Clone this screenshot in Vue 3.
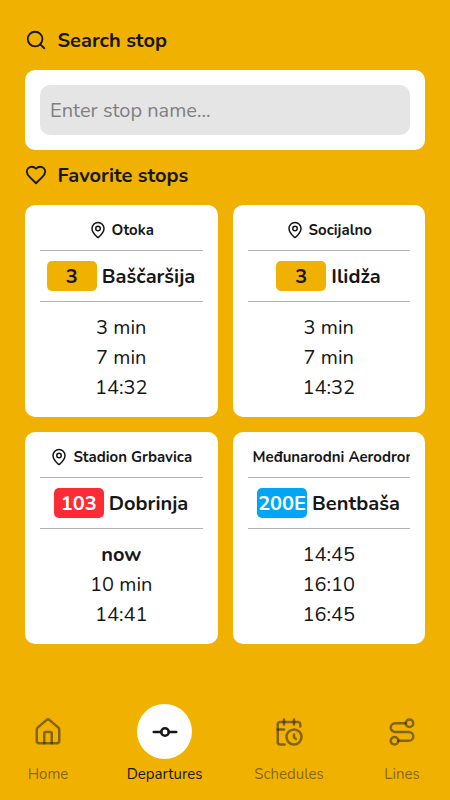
<script setup>
const stops = [
  { id: 'otoka', name: 'Otoka', line: '3', tone: 'yellow', to: 'Baščaršija', times: ['3 min', '7 min', '14:32'] },
  { id: 'socijalno', name: 'Socijalno', line: '3', tone: 'yellow', to: 'Ilidža', times: ['3 min', '7 min', '14:32'] },
  { id: 'stadion', name: 'Stadion Grbavica', line: '103', tone: 'red', to: 'Dobrinja', times: ['now', '10 min', '14:41'] },
  { id: 'aerodrom', name: 'Međunarodni Aerodrom', line: '200E', tone: 'blue', to: 'Bentbaša', times: ['14:45', '16:10', '16:45'] },
]

const tabs = [
  {
    id: 'home', label: 'Home',
    paths: [
      'M15 21v-8a1 1 0 0 0-1-1h-4a1 1 0 0 0-1 1v8',
      'M3 10a2 2 0 0 1 .709-1.528l7-5.999a2 2 0 0 1 2.582 0l7 5.999A2 2 0 0 1 21 10v9a2 2 0 0 1-2 2H5a2 2 0 0 1-2-2z',
    ],
    circles: [],
  },
  { id: 'departures', label: 'Departures', active: true, paths: ['M3 12h6', 'M15 12h6'], circles: [[12, 12, 3]] },
  {
    id: 'schedules', label: 'Schedules',
    paths: [
      'M21 7.5V6a2 2 0 0 0-2-2H5a2 2 0 0 0-2 2v14a2 2 0 0 0 2 2h3.5',
      'M16 2v4', 'M8 2v4', 'M3 10h5', 'M17.5 17.5 16 16.3V14',
    ],
    circles: [[16, 16, 6]],
  },
  {
    id: 'lines', label: 'Lines',
    paths: ['M9 19h8.5a3.5 3.5 0 0 0 0-7h-11a3.5 3.5 0 0 1 0-7H15'],
    circles: [[6, 19, 3], [18, 5, 3]],
  },
]
</script>

<template>
  <div class="screen">
    <main class="content">
      <h2 class="heading">
        <svg class="icon heading-icon" viewBox="0 0 24 24"><circle cx="11" cy="11" r="8" /><path d="m21 21-4.3-4.3" /></svg>
        <span class="title">Search stop</span>
      </h2>
      <div class="search-card">
        <input class="search-input" type="text" placeholder="Enter stop name...">
      </div>
      <h2 class="heading">
        <svg class="icon heading-icon" viewBox="0 0 24 24"><path d="M19 14c1.49-1.46 3-3.21 3-5.5A5.5 5.5 0 0 0 16.5 3c-1.76 0-3 .5-4.5 2-1.5-1.5-2.74-2-4.5-2A5.5 5.5 0 0 0 2 8.5c0 2.3 1.5 4.05 3 5.5l7 7Z" /></svg>
        <span class="title">Favorite stops</span>
      </h2>
      <div class="grid">
        <article v-for="stop in stops" :key="stop.id" class="card">
          <div class="stop">
            <svg class="icon pin" viewBox="0 0 24 24"><path d="M20 10c0 4.993-5.539 10.193-7.399 11.799a1 1 0 0 1-1.202 0C9.539 20.193 4 14.993 4 10a8 8 0 0 1 16 0" /><circle cx="12" cy="10" r="3" /></svg>
            <span class="stop-name">{{ stop.name }}</span>
          </div>
          <div class="route">
            <span class="badge" :class="stop.tone">{{ stop.line }}</span>
            <span class="destination">{{ stop.to }}</span>
          </div>
          <div class="times">
            <span v-for="time in stop.times" :key="time" class="time" :class="{ now: time === 'now' }">{{ time }}</span>
          </div>
        </article>
      </div>
    </main>
    <nav class="tabs">
      <a v-for="tab in tabs" :key="tab.id" class="tab" :class="[tab.id, { active: tab.active }]">
        <span class="bubble">
          <svg class="icon tab-icon" viewBox="0 0 24 24">
            <path v-for="d in tab.paths" :key="d" :d="d" />
            <circle v-for="c in tab.circles" :key="c.join()" :cx="c[0]" :cy="c[1]" :r="c[2]" />
          </svg>
        </span>
        <span class="tab-label">{{ tab.label }}</span>
      </a>
    </nav>
  </div>
</template>

<style>
body { margin: 0; background: #f0b100; }
</style>

<style scoped>
.screen {
  box-sizing: border-box;
  height: 800px;
  display: flex;
  flex-direction: column;
  justify-content: space-between;
  overflow: hidden;
  background: #f0b100;
  color: #171717;
  font-family: Nunito, Lato, "Noto Sans", sans-serif;
  font-size: 20px;
  line-height: 30px;
}
.content { padding: 25px 25px 0; }
.icon {
  fill: none;
  stroke: currentColor;
  stroke-width: 2;
  stroke-linecap: round;
  stroke-linejoin: round;
}
.heading {
  display: flex;
  align-items: center;
  gap: 10.5px;
  height: 30px;
  margin: 0;
  font-size: 20px;
  font-weight: 700;
}
.heading-icon { width: 22px; height: 22px; }
.title, .destination { padding-top: 2px; }
.search-card {
  margin: 15px 0 10px;
  padding: 15px;
  border-radius: 10px;
  background: #fff;
}
.search-input {
  display: block;
  box-sizing: border-box;
  width: 100%;
  height: 50px;
  padding: 0 10px;
  border: 0;
  border-radius: 10px;
  background: #e5e5e5;
  font: inherit;
}
.search-input::placeholder { color: #808080; opacity: 1; }
.grid {
  display: grid;
  grid-template-columns: minmax(0, 1fr) minmax(0, 1fr);
  gap: 15px;
  margin-top: 15px;
}
.card {
  padding: 15px;
  border-radius: 10px;
  background: #fff;
}
.stop, .route {
  display: flex;
  align-items: center;
  justify-content: center;
  gap: 5px;
  border-bottom: 1px solid #b3b3b3;
  white-space: nowrap;
}
.stop {
  height: 20px;
  padding-bottom: 10px;
  font-size: 15px;
  font-weight: 700;
  line-height: 20px;
}
.pin { flex: 0 1000 18px; height: 18px; min-width: 0; }
.stop-name { min-width: 0; overflow: hidden; }
.route {
  height: 30px;
  padding: 10px 0.4px 10px 0;
  font-weight: 700;
}
.badge {
  flex: none;
  width: 50px;
  height: 30px;
  border-radius: 5px;
  line-height: 32px;
  text-align: center;
}
.yellow { background: #f0b100; }
.red { background: #fb2c36; color: #fff; }
.blue { background: #00a6f4; color: #fff; }
.times {
  display: flex;
  flex-direction: column;
  align-items: center;
  margin-bottom: -1px;
  padding-top: 11px;
}
.now { font-weight: 700; }
.tabs {
  display: flex;
  justify-content: space-between;
  padding: 0 20.5px 15px;
}
.tab {
  display: flex;
  flex-direction: column;
  align-items: center;
  gap: 5px;
  width: 55px;
  color: rgba(23, 23, 23, 0.5);
  font-size: 15px;
  line-height: 21px;
}
.tab.departures { width: 78px; }
.tab.schedules { width: 71px; }
.tab.active { color: #171717; }
.bubble {
  display: flex;
  align-items: center;
  justify-content: center;
  width: 55px;
  height: 55px;
  border-radius: 50%;
}
.active .bubble { background: #fff; }
.tab-icon { width: 30px; height: 30px; }
</style>
